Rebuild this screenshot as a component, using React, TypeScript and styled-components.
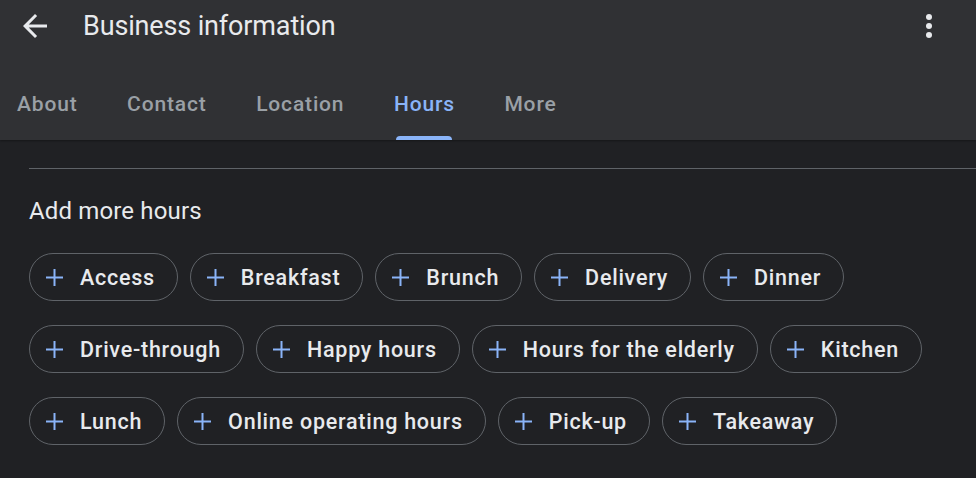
import React from "react";
import styled, { createGlobalStyle } from "styled-components";

const GlobalStyle = createGlobalStyle`
  html, body {
    margin: 0;
    padding: 0;
    background: #202124;
  }
  body {
    font-family: Roboto, "Noto Sans", Arial, sans-serif;
    -webkit-font-smoothing: antialiased;
  }
  * { box-sizing: border-box; }
`;

const Page = styled.div`
  width: 976px;
  height: 478px;
  overflow: hidden;
  background: #202124;
  display: flex;
  flex-direction: column;
`;

const Header = styled.header`
  background: #303134;
  display: flex;
  flex-direction: column;
  box-shadow: 0 1px 2px rgba(0, 0, 0, 0.35);
  position: relative;
  z-index: 1;
`;

const TopBar = styled.div`
  height: 52px;
  display: flex;
  align-items: center;
  padding: 0 29px 0 17px;
  margin-bottom: 16px;
`;

const IconButton = styled.button`
  width: 36px;
  height: 36px;
  padding: 0;
  border: 0;
  background: transparent;
  color: #e8eaed;
  display: flex;
  align-items: center;
  justify-content: center;
  cursor: pointer;
  svg { display: block; }
`;

const Title = styled.h1`
  flex: 1;
  margin: 0 0 0 30px;
  font-size: 27px;
  font-weight: 400;
  color: #e8eaed;
  letter-spacing: -0.15px;
`;

const TabBar = styled.nav`
  height: 72px;
  display: flex;
  align-items: stretch;
  gap: 49.5px;
  padding-left: 17px;
`;

const Tab = styled.div<{ $active?: boolean }>`
  position: relative;
  display: flex;
  align-items: center;
  font-size: 21px;
  font-weight: 500;
  letter-spacing: 0.85px;
  color: ${(p) => (p.$active ? "#8ab4f8" : "#9aa0a6")};
  cursor: pointer;

  &::after {
    content: "";
    display: ${(p) => (p.$active ? "block" : "none")};
    position: absolute;
    left: 2px;
    right: 3px;
    bottom: 0;
    height: 4px;
    border-radius: 4px 4px 0 0;
    background: #8ab4f8;
  }
`;

const Body = styled.main`
  padding: 28px 0 0 29px;
  display: flex;
  flex-direction: column;
`;

const Divider = styled.hr`
  margin: 0;
  border: 0;
  height: 1px;
  background: #5f6368;
`;

const SectionTitle = styled.h2`
  margin: 24px 0 24px;
  font-size: 24px;
  line-height: 36px;
  font-weight: 400;
  letter-spacing: 0.15px;
  color: #e8eaed;
`;

const ChipRows = styled.div`
  display: flex;
  flex-direction: column;
  gap: 24px;
`;

const ChipRow = styled.div`
  display: flex;
  gap: 12px;
`;

const Chip = styled.button`
  height: 48px;
  border: 1px solid #5f6368;
  border-radius: 24px;
  background: transparent;
  display: flex;
  align-items: center;
  gap: 16px;
  padding: 0 22px 0 15px;
  font-family: inherit;
  font-size: 21.5px;
  font-weight: 500;
  letter-spacing: 0.75px;
  color: #e8eaed;
  cursor: pointer;
  white-space: nowrap;
  svg { display: block; flex: none; }
`;

const BackIcon = () => (
  <svg width="36" height="36" viewBox="0 0 24 24" fill="currentColor">
    <path d="M20 11H7.83l5.59-5.59L12 4l-8 8 8 8 1.41-1.41L7.83 13H20v-2z" />
  </svg>
);

const MoreIcon = () => (
  <svg width="36" height="36" viewBox="0 0 24 24" fill="currentColor">
    <circle cx="12" cy="6" r="2" />
    <circle cx="12" cy="12" r="2" />
    <circle cx="12" cy="18" r="2" />
  </svg>
);

const PlusIcon = () => (
  <svg width="19" height="19" viewBox="0 0 19 19" fill="none" stroke="#8ab4f8" strokeWidth="2">
    <path d="M9.5 1v17M1 9.5h17" />
  </svg>
);

const tabs = ["About", "Contact", "Location", "Hours", "More"];

const rows = [
  ["Access", "Breakfast", "Brunch", "Delivery", "Dinner"],
  ["Drive-through", "Happy hours", "Hours for the elderly", "Kitchen"],
  ["Lunch", "Online operating hours", "Pick-up", "Takeaway"],
];

export default function App() {
  return (
    <>
      <GlobalStyle />
      <Page>
        <Header>
          <TopBar>
            <IconButton aria-label="Back">
              <BackIcon />
            </IconButton>
            <Title>Business information</Title>
            <IconButton aria-label="More options">
              <MoreIcon />
            </IconButton>
          </TopBar>
          <TabBar>
            {tabs.map((t) => (
              <Tab key={t} $active={t === "Hours"}>
                {t}
              </Tab>
            ))}
          </TabBar>
        </Header>
        <Body>
          <Divider />
          <SectionTitle>Add more hours</SectionTitle>
          <ChipRows>
            {rows.map((row, i) => (
              <ChipRow key={i}>
                {row.map((label) => (
                  <Chip key={label}>
                    <PlusIcon />
                    {label}
                  </Chip>
                ))}
              </ChipRow>
            ))}
          </ChipRows>
        </Body>
      </Page>
    </>
  );
}
